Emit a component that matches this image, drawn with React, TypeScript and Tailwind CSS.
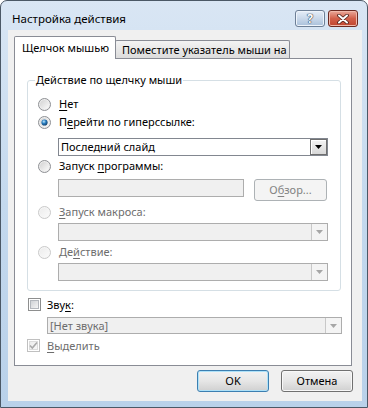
import React from 'react';

const font = "font-['Noto_Sans',sans-serif]";

const Radio = ({ id, checked = false, disabled = false }: { id: string; checked?: boolean; disabled?: boolean }) => (
  <svg width="13" height="13" viewBox="0 0 13 13" className="block shrink-0">
    <defs>
      <linearGradient id={`rg-${id}`} x1="0" y1="0" x2="1" y2="1">
        <stop offset="0" stopColor={disabled ? '#ececec' : '#d2d2d2'} />
        <stop offset="1" stopColor={disabled ? '#fafafa' : '#fbfbfb'} />
      </linearGradient>
      <radialGradient id={`rd-${id}`} cx="0.4" cy="0.35" r="0.7">
        <stop offset="0" stopColor="#bfe9ff" />
        <stop offset="0.45" stopColor="#2b7fc1" />
        <stop offset="1" stopColor="#0b3763" />
      </radialGradient>
    </defs>
    <circle cx="6.5" cy="6.5" r="6" fill={disabled ? '#f6f6f6' : '#eeeeee'} stroke={disabled ? '#c9c9c9' : '#8e9094'} />
    <circle cx="6.5" cy="6.5" r="4.6" fill={`url(#rg-${id})`} />
    {checked && <circle cx="6.5" cy="6.5" r="3.1" fill={`url(#rd-${id})`} />}
  </svg>
);

const Checkbox = ({ id, checked = false, disabled = false }: { id: string; checked?: boolean; disabled?: boolean }) => (
  <svg width="13" height="13" viewBox="0 0 13 13" className="block shrink-0">
    <defs>
      <linearGradient id={`cg-${id}`} x1="0" y1="0" x2="1" y2="1">
        <stop offset="0" stopColor={disabled ? '#ececec' : '#cdd0d4'} />
        <stop offset="1" stopColor={disabled ? '#f8f8f8' : '#f7f7f7'} />
      </linearGradient>
    </defs>
    <rect x="0.5" y="0.5" width="12" height="12" fill="#fff" stroke={disabled ? '#c0c0c0' : '#8e8f8f'} />
    <rect x="2.5" y="2.5" width="8" height="8" fill={`url(#cg-${id})`} stroke={disabled ? '#dcdcdc' : '#b3b7bd'} />
    {checked && (
      <path d="M3 6.5 L5.3 9 L10 3.5" fill="none" stroke="#a9a9a9" strokeWidth="1.6" />
    )}
  </svg>
);

const Arrow = ({ color }: { color: string }) => (
  <svg width="7" height="4" viewBox="0 0 7 4" className="block">
    <path d="M0 0 H7 L3.5 4 Z" fill={color} />
  </svg>
);

const Combo = ({ text, disabled = false, className }: { text?: string; disabled?: boolean; className: string }) => (
  <div
    className={`flex border ${
      disabled ? 'border-[#adadad] bg-[#f0f0f0]' : 'border-[#828790] bg-white'
    } ${className}`}
  >
    <div className={`flex-1 whitespace-nowrap pl-[2px] leading-[15px] ${disabled ? 'text-[#6d6d6d]' : 'text-black'}`}>{text}</div>
    {disabled ? (
      <div className="flex w-[16px] items-center justify-center border-l border-[#c8c8c8] bg-[#f4f4f4]">
        <Arrow color="#a6a6a6" />
      </div>
    ) : (
      <div className="flex w-[17px] items-center justify-center border border-[#6f6f6f] bg-gradient-to-b from-[#f4f4f4] to-[#d8d8d8] shadow-[inset_1px_1px_0_#fff]">
        <Arrow color="#000" />
      </div>
    )}
  </div>
);

const OptionRow = ({ children, className }: { children: React.ReactNode; className: string }) => (
  <div className={`flex h-[16px] items-center gap-[8px] whitespace-nowrap pl-[10px] leading-[16px] ${className}`}>{children}</div>
);

const U = ({ children }: { children: React.ReactNode }) => (
  <span className="underline decoration-1 underline-offset-[2px]">{children}</span>
);

const DialogButton = ({ label, primary = false }: { label: string; primary?: boolean }) => (
  <div
    className={`flex h-[22px] w-[72px] items-center justify-center rounded-[3px] border bg-gradient-to-b from-[#f2f2f2] via-[#e6e6e6] to-[#d0d0d0] leading-[16px] text-black ${
      primary ? 'border-[#3c7fb1] shadow-[inset_0_0_0_1px_#aee1f8]' : 'border-[#707070] shadow-[inset_0_0_0_1px_#f8f8f8]'
    }`}
  >
    {label}
  </div>
);

export default function App() {
  return (
    <div className={`h-[408px] w-[368px] bg-white text-[11px] ${font}`}>
      <div className="flex h-[408px] w-[368px] flex-col rounded-t-[7px] border border-[#4b5866] bg-gradient-to-b from-[#d9e6f4] via-[#c4d9ee] to-[#b9d1ea]">
        {/* title bar */}
        <div className="flex h-[29px] items-start pl-[11px] pr-[9px] pt-[9px]">
          <div className="flex-1 whitespace-nowrap text-[11.5px] leading-[17px] text-black">Настройка действия</div>
          <div className="flex gap-[3px]">
            <div className="flex h-[17px] w-[30px] items-center justify-center rounded-[3px] border border-[#6d7f96] bg-gradient-to-b from-[#e6eef8] via-[#c9d8ea] to-[#a9c0da] shadow-[inset_0_0_0_1px_#eef4fb]">
              <span className="text-[12px] font-bold leading-[14px] text-white [text-shadow:0_0_1px_#2c3e55,0_0_1px_#2c3e55,0_0_1px_#2c3e55]">
                ?
              </span>
            </div>
            <div className="flex h-[17px] w-[30px] items-center justify-center rounded-[3px] border border-[#6b2a22] bg-gradient-to-b from-[#e9a99b] via-[#d2604b] to-[#c0452f] shadow-[inset_0_0_0_1px_#f0b9ab]">
              <svg width="12" height="10" viewBox="0 0 12 10" className="block">
                <path d="M2 1.5 L10 8.5 M10 1.5 L2 8.5" stroke="#4a1f19" strokeWidth="3.6" strokeLinecap="round" />
                <path d="M2 1.5 L10 8.5 M10 1.5 L2 8.5" stroke="#fff" strokeWidth="2" strokeLinecap="round" />
              </svg>
            </div>
          </div>
        </div>

        {/* client area */}
        <div className="mb-[6px] ml-[7px] mr-[5px] flex flex-1 flex-col bg-[#f0f0f0]">
          {/* tabs */}
          <div className="ml-[6px] mt-[6px] flex h-[22px] items-end whitespace-nowrap">
            <div className="relative z-10 -mb-px flex h-[23px] w-[102px] items-center rounded-t-[2px] border border-b-0 border-[#898c95] bg-white pl-[7px] leading-[16px] text-black">
              Щелчок мышью
            </div>
            <div className="-ml-px flex h-[18px] w-[175px] items-center rounded-t-[2px] border border-b-0 border-[#898c95] bg-gradient-to-b from-[#f3f3f3] to-[#dcdcdc] pl-[6px] leading-[16px] text-black">
              Поместите указатель мыши на
            </div>
          </div>

          {/* panel */}
          <div className="ml-[6px] flex h-[308px] w-[338px] flex-col border border-[#898c95] bg-white">
            <div className="relative ml-[12px] mt-[21px] flex h-[211px] w-[314px] flex-col rounded-[3px] border border-[#d5dfe5]">
              <div className="absolute left-[7px] top-[-9px] whitespace-nowrap bg-white px-[1px] leading-[16px] text-black">
                Действие по щелчку мыши
              </div>

              <OptionRow className="mt-[15px]">
                <Radio id="none" />
                <span className="text-black">
                  <U>Н</U>ет
                </span>
              </OptionRow>
              <OptionRow className="mt-[2px]">
                <Radio id="link" checked />
                <span className="text-black">
                  П<U>е</U>рейти по гиперссылке:
                </span>
              </OptionRow>
              <Combo text="Последний слайд" className="ml-[30px] mt-[8px] h-[18px] w-[270px]" />
              <OptionRow className="mt-[2px]">
                <Radio id="prog" />
                <span className="text-black">
                  Запуск <U>п</U>рограммы:
                </span>
              </OptionRow>
              <div className="ml-[30px] mt-[5px] flex h-[22px] items-start">
                <div className="h-[18px] w-[186px] border border-[#adadad] bg-[#f0f0f0]" />
                <div className="ml-[10px] flex h-[22px] w-[73px] items-center justify-center rounded-[3px] border border-[#adb2b5] bg-[#f4f4f4] leading-[16px] text-[#838383]">
                  О<U>б</U>зор...
                </div>
              </div>
              <OptionRow className="mt-[3px]">
                <Radio id="macro" disabled />
                <span className="text-[#6d6d6d]">
                  <U>З</U>апуск макроса:
                </span>
              </OptionRow>
              <Combo disabled className="ml-[30px] mt-[3px] h-[18px] w-[270px]" />
              <OptionRow className="mt-[3px]">
                <Radio id="action" disabled />
                <span className="text-[#6d6d6d]">
                  Де<U>й</U>ствие:
                </span>
              </OptionRow>
              <Combo disabled className="ml-[30px] mt-[3px] h-[18px] w-[270px]" />
            </div>

            <div className="ml-[13px] mt-[7px] flex h-[13px] items-center gap-[6px] leading-[16px]">
              <Checkbox id="sound" />
              <span className="text-black">
                Зву<U>к</U>:
              </span>
            </div>
            <Combo text="[Нет звука]" disabled className="ml-[32px] mt-[6px] h-[17px] w-[295px]" />
            <div className="ml-[12px] mt-[5px] flex h-[13px] items-center gap-[7px] leading-[16px]">
              <Checkbox id="hl" checked disabled />
              <span className="text-[#6d6d6d]">
                <U>В</U>ыделить
              </span>
            </div>
          </div>

          {/* buttons */}
          <div className="mr-[9px] mt-[4px] flex justify-end gap-[12px]">
            <DialogButton label="OK" primary />
            <DialogButton label="Отмена" />
          </div>
        </div>
      </div>
    </div>
  );
}
